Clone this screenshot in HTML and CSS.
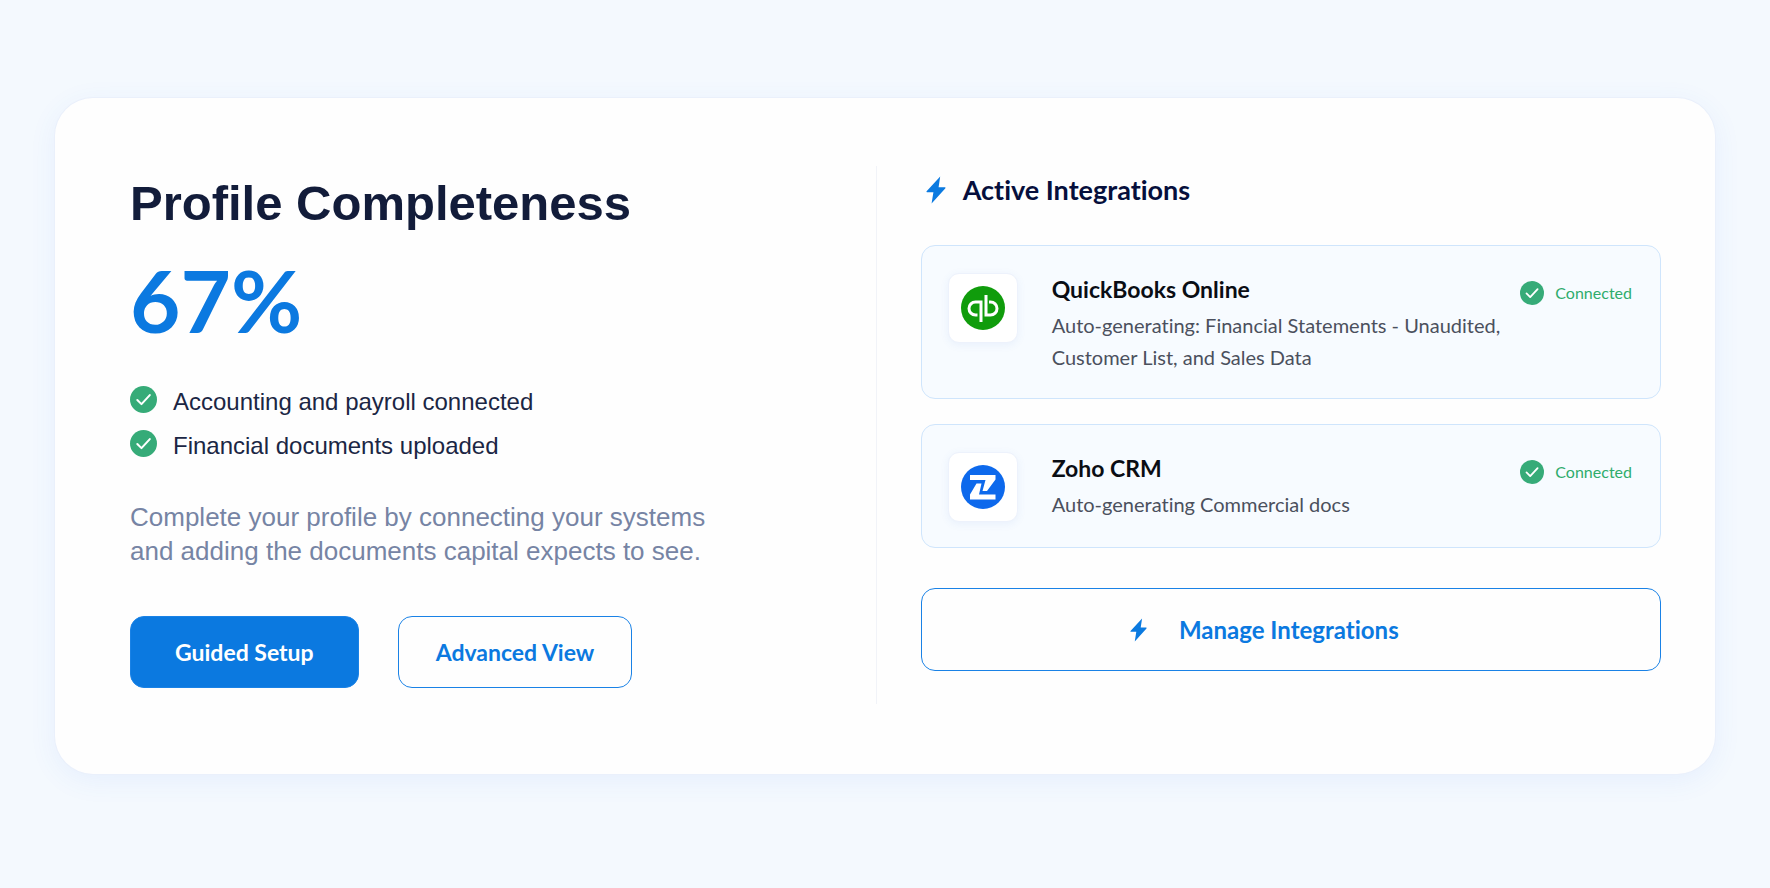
FILE: index.html
```html
<!DOCTYPE html>
<html lang="en">
<head>
	<meta charset="UTF-8">
	<title>Profile Completeness</title>
	<link rel="stylesheet" href="styles.css">
</head>
<body>
<svg class="sprite" aria-hidden="true">
	<symbol id="check" viewBox="0 0 24 24">
		<circle cx="12" cy="12" r="12" fill="#36ab78"/>
		<path d="M6.5 12.4l3.7 3.7 7.4-8" fill="none" stroke="#fff" stroke-width="1.8" stroke-linecap="round" stroke-linejoin="round"/>
	</symbol>
	<symbol id="bolt" viewBox="0 0 20 28">
		<path d="M14.2.4L.6 15.2q-.6.9.5 1h6.3L5.6 27.6 19.4 12.2q.5-.9-.5-1h-6.3z" fill="#0b7ae0"/>
	</symbol>
</svg>
<main class="card">
	<section class="profile">
		<h1>Profile Completeness</h1>
		<p class="percent">67%</p>
		<ul class="checklist">
			<li><svg class="icon"><use href="#check"/></svg>Accounting and payroll connected</li>
			<li><svg class="icon"><use href="#check"/></svg>Financial documents uploaded</li>
		</ul>
		<p class="hint">Complete your profile by connecting your systems and adding the documents capital expects to see.</p>
		<div class="actions">
			<button type="button" class="btn primary">Guided Setup</button>
			<button type="button" class="btn">Advanced View</button>
		</div>
	</section>
	<section class="integrations">
		<h2><svg class="bolt"><use href="#bolt"/></svg>Active Integrations</h2>
		<article class="item">
			<div class="logo">
				<svg viewBox="0 0 44 44">
					<circle cx="22" cy="22" r="22" fill="#109c0c"/>
					<g fill="none" stroke="#fff" stroke-width="3">
						<path d="M20 36V16H14.5a6.5 6.5 0 0 0 0 13H16.5"/>
						<path d="M25 9V29H29.5a6.5 6.5 0 0 0 0-13H28"/>
					</g>
				</svg>
			</div>
			<div class="info">
				<h3>QuickBooks Online</h3>
				<p>Auto-generating: Financial Statements - Unaudited, Customer List, and Sales Data</p>
			</div>
			<span class="status"><svg class="icon"><use href="#check"/></svg>Connected</span>
		</article>
		<article class="item">
			<div class="logo">
				<svg viewBox="0 0 44 44">
					<circle cx="22" cy="22" r="22" fill="#0d69ec"/>
					<path d="M9 10H34.5V14.5L26 26H21.5L24.5 15H9z" fill="#fff"/>
					<path d="M34.5 34.5H9V29.5L15.5 18.5H20.5L18 29.5H34.5z" fill="#fff"/>
				</svg>
			</div>
			<div class="info">
				<h3>Zoho CRM</h3>
				<p>Auto-generating Commercial docs</p>
			</div>
			<span class="status"><svg class="icon"><use href="#check"/></svg>Connected</span>
		</article>
		<button type="button" class="btn manage"><svg class="bolt"><use href="#bolt"/></svg>Manage Integrations</button>
	</section>
</main>
</body>
</html>
```
FILE: styles.css
```css
* {
	box-sizing: border-box;
}
body {
	margin: 0;
	padding: 98px 55px;
	background: #f4f9fe;
	font-family: Lato, "Open Sans", sans-serif;
	font-variant-ligatures: none;
	color: #121c3a;
}
h1, h2, h3, p, ul {
	margin: 0;
	padding: 0;
}
svg {
	display: block;
	flex: none;
}
.sprite {
	display: none;
}
.card {
	display: grid;
	grid-template-columns: 49.5% 1fr;
	padding: 68px 0 70px;
	background: #fefefe;
	border-radius: 38px;
	box-shadow: 0 0 0 1px #eaf0fb, 0 6px 28px rgba(70, 120, 240, .08);
}
.profile {
	padding: 7px 75px 16px;
	border-right: 1px solid #f1f3f8;
	font-family: "Liberation Sans", Arial, sans-serif;
}
h1 {
	font-size: 49px;
	line-height: 60px;
}
.percent {
	margin-top: 25px;
	font: bold 87px/84px Lato, sans-serif;
	color: #0b79e0;
}
.checklist {
	margin-top: 38px;
	list-style: none;
}
.checklist li {
	display: flex;
	align-items: center;
	gap: 16px;
	font-size: 24px;
	line-height: 44px;
	color: #1b2644;
}
.checklist .icon {
	width: 27px;
	height: 27px;
	margin-bottom: 6px;
}
.hint {
	max-width: 600px;
	margin-top: 32px;
	font-size: 26px;
	line-height: 34px;
	color: #7684a4;
}
.actions {
	display: flex;
	gap: 39px;
	margin-top: 48px;
}
.btn {
	height: 72px;
	padding: 0 37px;
	border: 1px solid #1a82e6;
	border-radius: 14px;
	background: #fefefe;
	font: bold 23px Lato, sans-serif;
	font-variant-ligatures: none;
	color: #0b79e0;
	cursor: pointer;
}
.btn.primary {
	padding: 0 44px;
	background: #0b79e0;
	color: #fff;
}
.integrations {
	padding: 6px 54px 33px 44px;
}
h2 {
	display: flex;
	align-items: center;
	gap: 17px;
	padding-left: 5px;
	margin-bottom: 37px;
	font-size: 27px;
	line-height: 36px;
	color: #060f3c;
}
.bolt {
	width: 20px;
	height: 28px;
}
.item {
	display: flex;
	align-items: flex-start;
	padding: 27px 28px 25px 26px;
	margin-bottom: 25px;
	border: 1px solid #cfe5fc;
	border-radius: 14px;
	background: #f7fbff;
}
.logo {
	padding: 12px;
	border: 1px solid #edf2fc;
	border-radius: 11px;
	background: #fff;
	box-shadow: 0 2px 8px rgba(70, 110, 220, .08);
}
.logo svg {
	width: 44px;
	height: 44px;
}
.info {
	flex: 1;
	margin-left: 34px;
}
h3 {
	margin-bottom: 4px;
	font-size: 23px;
	line-height: 32px;
	color: #0a0d14;
}
.info p {
	max-width: 460px;
	font-size: 20px;
	line-height: 32px;
	color: #4b505d;
}
.status {
	display: flex;
	align-items: center;
	gap: 11px;
	padding-top: 4px;
	font-size: 16px;
	line-height: 32px;
	color: #2fac6c;
}
.status .icon {
	width: 24px;
	height: 24px;
}
.manage {
	display: flex;
	align-items: center;
	justify-content: center;
	gap: 32px;
	width: 100%;
	height: 83px;
	margin-top: 40px;
	padding-right: 90px;
	font-size: 24px;
}
.manage .bolt {
	width: 17px;
	height: 24px;
}
```
